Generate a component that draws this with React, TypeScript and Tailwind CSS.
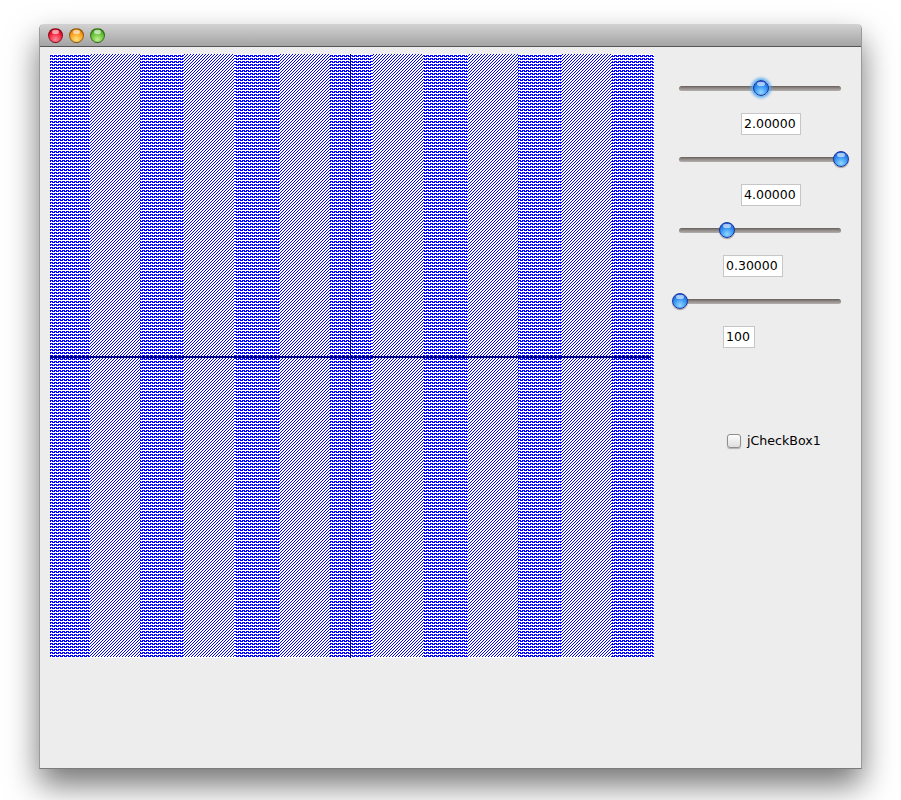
const bands: [number, number, string][] = [
  [0, 39, "rows"],
  [39, 90, "diag"],
  [90, 133, "rows"],
  [133, 185, "diag"],
  [185, 229, "rows"],
  [229, 280, "diag"],
  [280, 322, "rows"],
  [322, 373, "diag"],
  [373, 417, "rows"],
  [417, 468, "diag"],
  [468, 511, "rows"],
  [511, 562, "diag"],
  [562, 604, "rows"],
];

const sliders = [
  { pos: 81.5, value: "2.00000", box: "ml-[62px] w-[60px]", glow: true },
  { pos: 161.5, value: "4.00000", box: "ml-[62px] w-[60px]", glow: false },
  { pos: 47.5, value: "0.30000", box: "ml-[44px] w-[60px]", glow: false },
  { pos: 1, value: "100", box: "ml-[44px] w-[32px]", glow: false },
];

function Plot() {
  return (
    <svg width="604" height="604" viewBox="0 0 604 604" shapeRendering="crispEdges" className="block shrink-0">
      <defs>
        <pattern id="rows" x="0" y="1" width="4" height="3" patternUnits="userSpaceOnUse">
          <rect x="0" y="0" width="3" height="1" fill="#0000ff" />
          <rect x="0" y="1" width="1" height="1" fill="#0000ff" />
          <rect x="2" y="1" width="2" height="1" fill="#0000ff" />
        </pattern>
        <pattern id="diag" x="0" y="0" width="3" height="3" patternUnits="userSpaceOnUse">
          <rect x="0" y="2" width="1" height="1" fill="#0000ff" />
          <rect x="1" y="1" width="1" height="1" fill="#0000ff" />
          <rect x="2" y="0" width="1" height="1" fill="#0000ff" />
        </pattern>
      </defs>
      <rect width="604" height="604" fill="#ffffff" />
      {bands.map(([a, b, kind]) => (
        <rect key={a} x={a} y={kind === "rows" ? 1 : 0} width={b - a} height={603} fill={`url(#${kind})`} />
      ))}
      <rect x="0" y="302" width="601" height="2" fill="#00008b" />
      <rect x="300" y="0" width="1" height="604" fill="#00008b" />
    </svg>
  );
}

function Thumb({ pos, glow }: { pos: number; glow: boolean }) {
  return (
    <span
      className={
        "absolute top-0 -ml-2 size-4 rounded-full border border-[#1a36a0] bg-[radial-gradient(circle_at_50%_80%,#8fd8ff_0%,#2f8cf0_55%,#0c46c8_100%)] " +
        (glow ? "shadow-[0_0_3px_2px_#5aacf2]" : "shadow-[0_1px_1px_rgba(0,0,0,0.35)]")
      }
      style={{ left: pos }}
    >
      <span className="absolute left-[3px] top-px h-1 w-2 rounded-full bg-white/60" />
    </span>
  );
}

function Slider({ pos, glow }: { pos: number; glow: boolean }) {
  return (
    <div className="relative flex h-4 w-[162px] items-center">
      <div className="h-[5px] w-full rounded-full bg-[linear-gradient(#645c58,#8d8784_40%,#b4b0ae)]" />
      <Thumb pos={pos} glow={glow} />
    </div>
  );
}

function Light({ color }: { color: string }) {
  return (
    <span className={"relative size-[15px] rounded-full border border-black/40 " + color}>
      <span className="absolute left-[3px] top-px h-1 w-[7px] rounded-full bg-white/60" />
    </span>
  );
}

export default function App() {
  return (
    <div className="h-[800px] overflow-hidden bg-white pl-[39px] pt-6 font-['DejaVu_Sans',sans-serif] text-black">
      <div className="flex h-[745px] w-[823px] flex-col rounded-t-[5px] border-x border-b border-x-[#9a9a9a] border-b-[#7c7c7c] bg-[#ededed] shadow-[0_16px_32px_rgba(0,0,0,0.55)]">
        <div className="flex h-[23px] shrink-0 items-center gap-1.5 rounded-t-[5px] border-b border-[#555555] bg-[linear-gradient(#d2d2d2,#a4a4a4)] pl-2">
          <Light color="bg-[radial-gradient(circle_at_50%_80%,#ff8a9a,#ee1530_60%,#b00018)]" />
          <Light color="bg-[radial-gradient(circle_at_50%_80%,#ffe27a,#f79a16_60%,#c46800)]" />
          <Light color="bg-[radial-gradient(circle_at_50%_80%,#bdf08a,#5cb92f_60%,#2f8a12)]" />
        </div>
        <div className="flex pl-2.5 pt-[7px]">
          <Plot />
          <div className="ml-[25px] flex flex-col pt-[26px]">
            {sliders.map((s) => (
              <div key={s.value} className="mb-4 flex flex-col">
                <Slider pos={s.pos} glow={s.glow} />
                <div className={"mt-[17px] flex h-[22px] items-center border border-[#c6c6c6] bg-white pl-[2px] text-[12.5px] " + s.box}>
                  {s.value}
                </div>
              </div>
            ))}
            <div className="ml-12 mt-[70px] flex h-3.5 items-center gap-1.5 text-[12.6px]">
              <span className="size-3.5 rounded-[3px] border border-[#8e8e8e] bg-[linear-gradient(#fdfdfd,#dedede)] shadow-[0_1px_1px_rgba(0,0,0,0.25)]" />
              <span>jCheckBox1</span>
            </div>
          </div>
        </div>
      </div>
    </div>
  );
}
